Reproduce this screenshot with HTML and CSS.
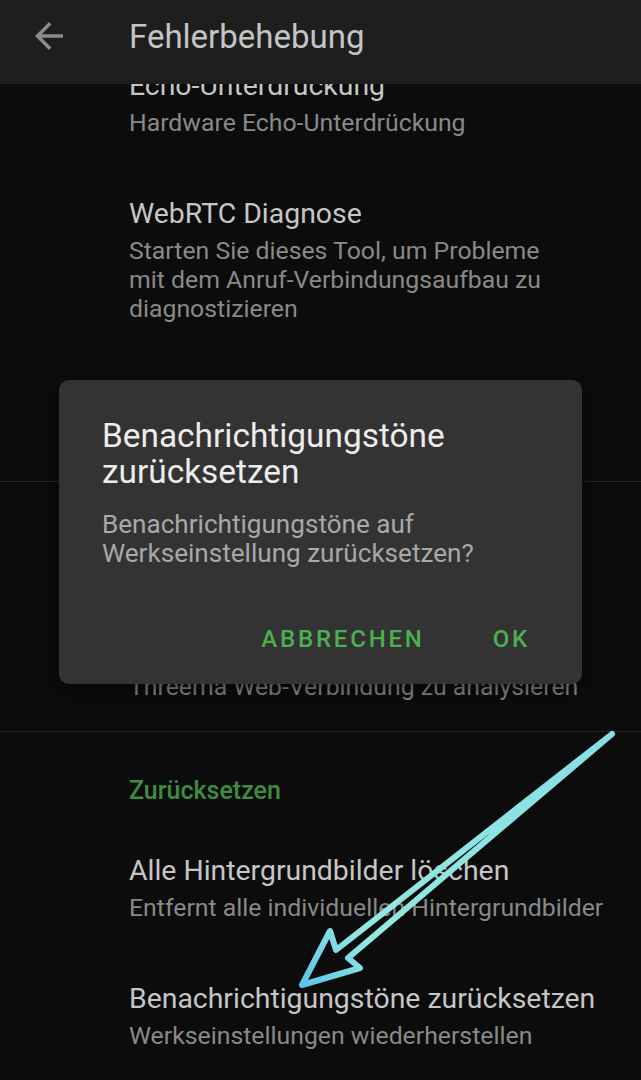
FILE: index.html
```html
<!DOCTYPE html>
<html lang="de">
<head>
  <meta charset="UTF-8">
  <meta name="viewport" content="width=device-width, initial-scale=1.0">
  <title>Fehlerbehebung</title>
  <link rel="stylesheet" href="styles.css">
</head>
<body>
<div class="screen">

  <header class="appbar">
    <svg class="back" viewBox="0 0 24 24" width="42" height="42">
      <path d="M20 11H7.83l5.59-5.59L12 4l-8 8 8 8 1.41-1.41L7.83 13H20v-2z" fill="#8c8c8c"/>
    </svg>
    <h1>Fehlerbehebung</h1>
  </header>

  <main class="list">
    <div class="item">
      <div class="title">Echo-Unterdrückung</div>
      <div class="summary">Hardware Echo-Unterdrückung</div>
    </div>
    <div class="item">
      <div class="title">WebRTC Diagnose</div>
      <div class="summary">Starten Sie dieses Tool, um Probleme<br>mit dem Anruf-Verbindungsaufbau zu<br>diagnostizieren</div>
    </div>
    <div class="item">
      <div class="title">Anrufe protokollieren</div>
      <div class="summary">Debug-Protokoll für Anrufe</div>
    </div>

    <hr class="divider">
    <div class="category">Threema Web</div>
    <div class="item">
      <div class="title">WebRTC Diagnose</div>
      <div class="summary">Starten Sie dieses Tool, um Probleme mit<br>Threema Web-Verbindung zu analysieren</div>
    </div>

    <hr class="divider">
    <div class="category">Zurücksetzen</div>
    <div class="item">
      <div class="title">Alle Hintergrundbilder löschen</div>
      <div class="summary">Entfernt alle individuellen Hintergrundbilder</div>
    </div>
    <div class="item">
      <div class="title">Benachrichtigungstöne zurücksetzen</div>
      <div class="summary">Werkseinstellungen wiederherstellen</div>
    </div>
  </main>

  <div class="dialog">
    <h2>Benachrichtigungstöne zurücksetzen</h2>
    <p>Benachrichtigungstöne auf Werkseinstellung zurücksetzen?</p>
    <div class="actions">
      <button>Abbrechen</button>
      <button>OK</button>
    </div>
  </div>

  <!-- hand drawn pointer on the screenshot -->
  <svg class="pointer" viewBox="0 0 641 1080" width="641" height="1080">
    <defs>
      <linearGradient id="cyan" x1="612" y1="734" x2="302" y2="985" gradientUnits="userSpaceOnUse">
        <stop offset="0" stop-color="#86dfe6"/>
        <stop offset="0.8" stop-color="#94e8e0"/>
        <stop offset="1" stop-color="#5cc4ea"/>
      </linearGradient>
    </defs>
    <polygon points="612,734 336,950 330,931 302,985 360,968 348,958"
             fill="none" stroke="url(#cyan)" stroke-width="6" stroke-linejoin="round" stroke-linecap="round"/>
  </svg>

</div>
</body>
</html>
```

FILE: styles.css
```css
body {
  margin: 0;
  padding: 0;
  background-color: #0c0c0c;
  font-family: Roboto, 'Noto Sans', sans-serif;
}

.screen {
  position: relative;
  width: 641px;
  height: 1080px;
  overflow: hidden;
  background-color: #0c0c0c;
}

.appbar {
  position: relative;
  z-index: 2;
  height: 84px;
  box-sizing: border-box;
  padding-bottom: 12px;
  display: flex;
  align-items: center;
  background-color: #1e1e1e;
}

.back {
  margin-left: 28px;
  flex-shrink: 0;
}

.appbar h1 {
  margin: 0 0 0 59px;
  font-size: 33px;
  font-weight: 400;
  color: #c4c4c4;
}

/* list is scrolled a bit under the toolbar */
.list {
  margin-top: -45px;
}

.item {
  padding: 30px 20px 30px 129px;
  white-space: nowrap;
}

.title {
  font-size: 28.4px;
  line-height: 34px;
  color: #c6c6c6;
}

.summary {
  margin-top: 5px;
  font-size: 24.8px;
  line-height: 29px;
  color: #898989;
}

.divider {
  margin: 0;
  border: none;
  border-top: 1px solid #262626;
}

.category {
  padding: 44px 0 18px 129px;
  font-size: 25px;
  line-height: 30px;
  font-weight: 500;
  color: #3f8b42;
}

.dialog {
  position: absolute;
  z-index: 3;
  left: 59px;
  top: 380px;
  width: 523px;
  height: 304px;
  box-sizing: border-box;
  padding: 38px 43px 30px 43px;
  background-color: #333333;
  border-radius: 10px;
  box-shadow: 0 6px 20px rgba(0,0,0,0.5);
}

.dialog h2 {
  margin: 0;
  font-size: 33.4px;
  line-height: 36px;
  font-weight: 400;
  color: #ececec;
}

.dialog p {
  margin: 20px 0 0 0;
  font-size: 26.1px;
  line-height: 29px;
  color: #a8a8a8;
}

.actions {
  display: flex;
  justify-content: flex-end;
  gap: 68px;
  margin-top: 56px;
  padding-right: 9px;
}

.actions button {
  padding: 0;
  border: none;
  background: none;
  font-family: Roboto, sans-serif;
  font-size: 24px;
  line-height: 30px;
  font-weight: 500;
  letter-spacing: 2.8px;
  text-transform: uppercase;
  color: #4caf50;
}

.pointer {
  position: absolute;
  z-index: 4;
  left: 0;
  top: 0;
  pointer-events: none;
}
```
